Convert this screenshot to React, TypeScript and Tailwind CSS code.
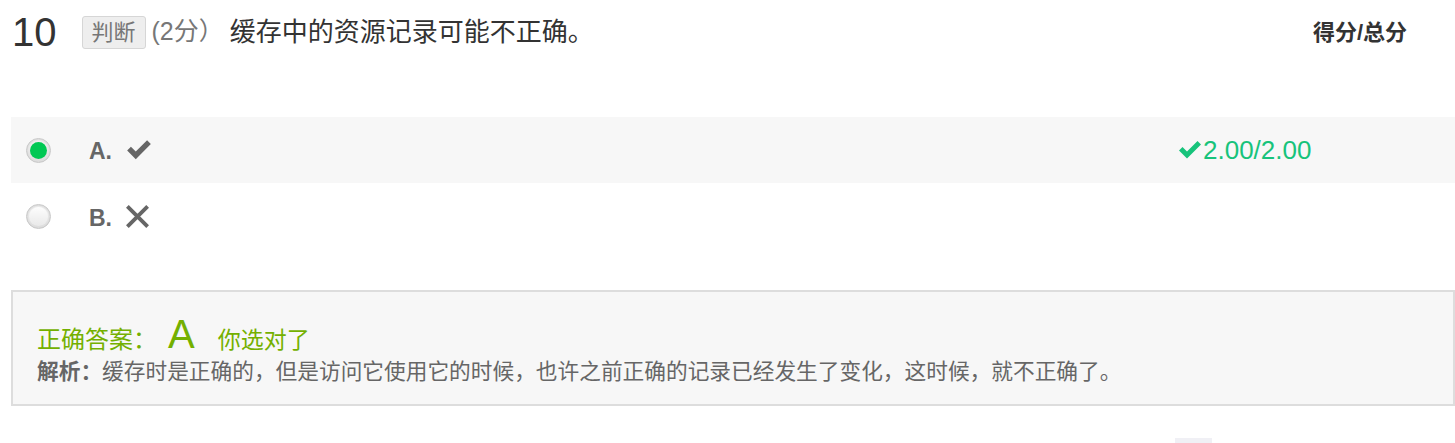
import React from 'react';

const font = "font-['Liberation_Sans','Noto_Sans_CJK_SC',sans-serif]";

const CheckMark = ({ className }: { className?: string }) => (
  <svg viewBox="0 0 26 22" className={className} fill="currentColor">
    <path d="M2 11.5 L5.5 8 L10 12.5 L20.5 2 L24 5.5 L10 19.5 Z" />
  </svg>
);

const Cross = ({ className }: { className?: string }) => (
  <svg viewBox="0 0 24 24" className={className} fill="none" stroke="currentColor" strokeWidth="3.4">
    <path d="M3 3 L21 21 M21 3 L3 21" />
  </svg>
);

const Radio = ({ checked }: { checked?: boolean }) => (
  <span className="flex h-[25px] w-[25px] items-center justify-center rounded-full border border-[#c8c8c8] bg-gradient-to-b from-[#f4f4f4] to-[#dcdcdc] shadow-[inset_0_1px_2px_rgba(0,0,0,0.12)]">
    {checked ? (
      <span className="h-[17px] w-[17px] rounded-full bg-[#00c853]" />
    ) : (
      <span className="h-[19px] w-[19px] rounded-full bg-gradient-to-b from-[#fdfdfd] to-[#e9e9e9]" />
    )}
  </span>
);

export default function App() {
  return (
    <div className={`w-full bg-white text-[#333] ${font}`}>
      {/* question header */}
      <div className="flex h-[64px] items-center justify-between pl-[12px] pr-[48px]">
        <div className="flex items-center">
          <span className="text-[40px] leading-none text-[#333]">10</span>
          <span className="ml-[25px] rounded-[3px] border border-[#d6d6d6] bg-[#eeeeee] px-[9px] py-[1px] text-[22px] leading-[29px] text-[#777]">判断</span>
          <span className="ml-[6px] text-[25px] text-[#777]">(2分）</span>
          <span className="ml-[6px] text-[26px] text-[#333]">缓存中的资源记录可能不正确。</span>
        </div>
        <span className="text-[22px] font-bold text-[#333]">得分/总分</span>
      </div>

      {/* options */}
      <div className="mt-[53px] ml-[11px]">
        <div className="flex h-[66px] items-center bg-[#f7f7f7] pl-[15px]">
          <Radio checked />
          <span className="ml-[38px] mt-[3px] text-[23px] font-bold text-[#666]">A.</span>
          <CheckMark className="ml-[13px] h-[24px] w-[28px] text-[#666]" />
          <div className="ml-auto flex w-[278px] items-center text-[26px] text-[#17c37b]">
            <CheckMark className="h-[22px] w-[26px]" />
            <span>2.00/2.00</span>
          </div>
        </div>
        <div className="flex h-[67px] items-center pl-[15px]">
          <Radio />
          <span className="ml-[38px] mt-[3px] text-[23px] font-bold text-[#666]">B.</span>
          <Cross className="ml-[12px] h-[27px] w-[27px] text-[#666]" />
        </div>
      </div>

      {/* answer analysis */}
      <div className="mt-[40px] ml-[11px] h-[116px] border-2 border-[#dddddd] bg-[#f7f7f7] px-[24px] pt-[20px]">
        <div className="flex items-baseline text-[#74b000]">
          <span className="text-[24px]">正确答案：</span>
          <span className="ml-[11px] text-[40px] leading-[44px]">A</span>
          <span className="ml-[23px] text-[23px]">你选对了</span>
        </div>
        <p className="text-[21.7px] leading-[28px] text-[#666]">
          <span className="font-bold">解析：</span>缓存时是正确的，但是访问它使用它的时候，也许之前正确的记录已经发生了变化，这时候，就不正确了。
        </p>
      </div>

      <div className="mt-[32px] flex h-[5px]">
        <span className="ml-[1175px] w-[37px] bg-[#f0f0f5]" />
      </div>
    </div>
  );
}
